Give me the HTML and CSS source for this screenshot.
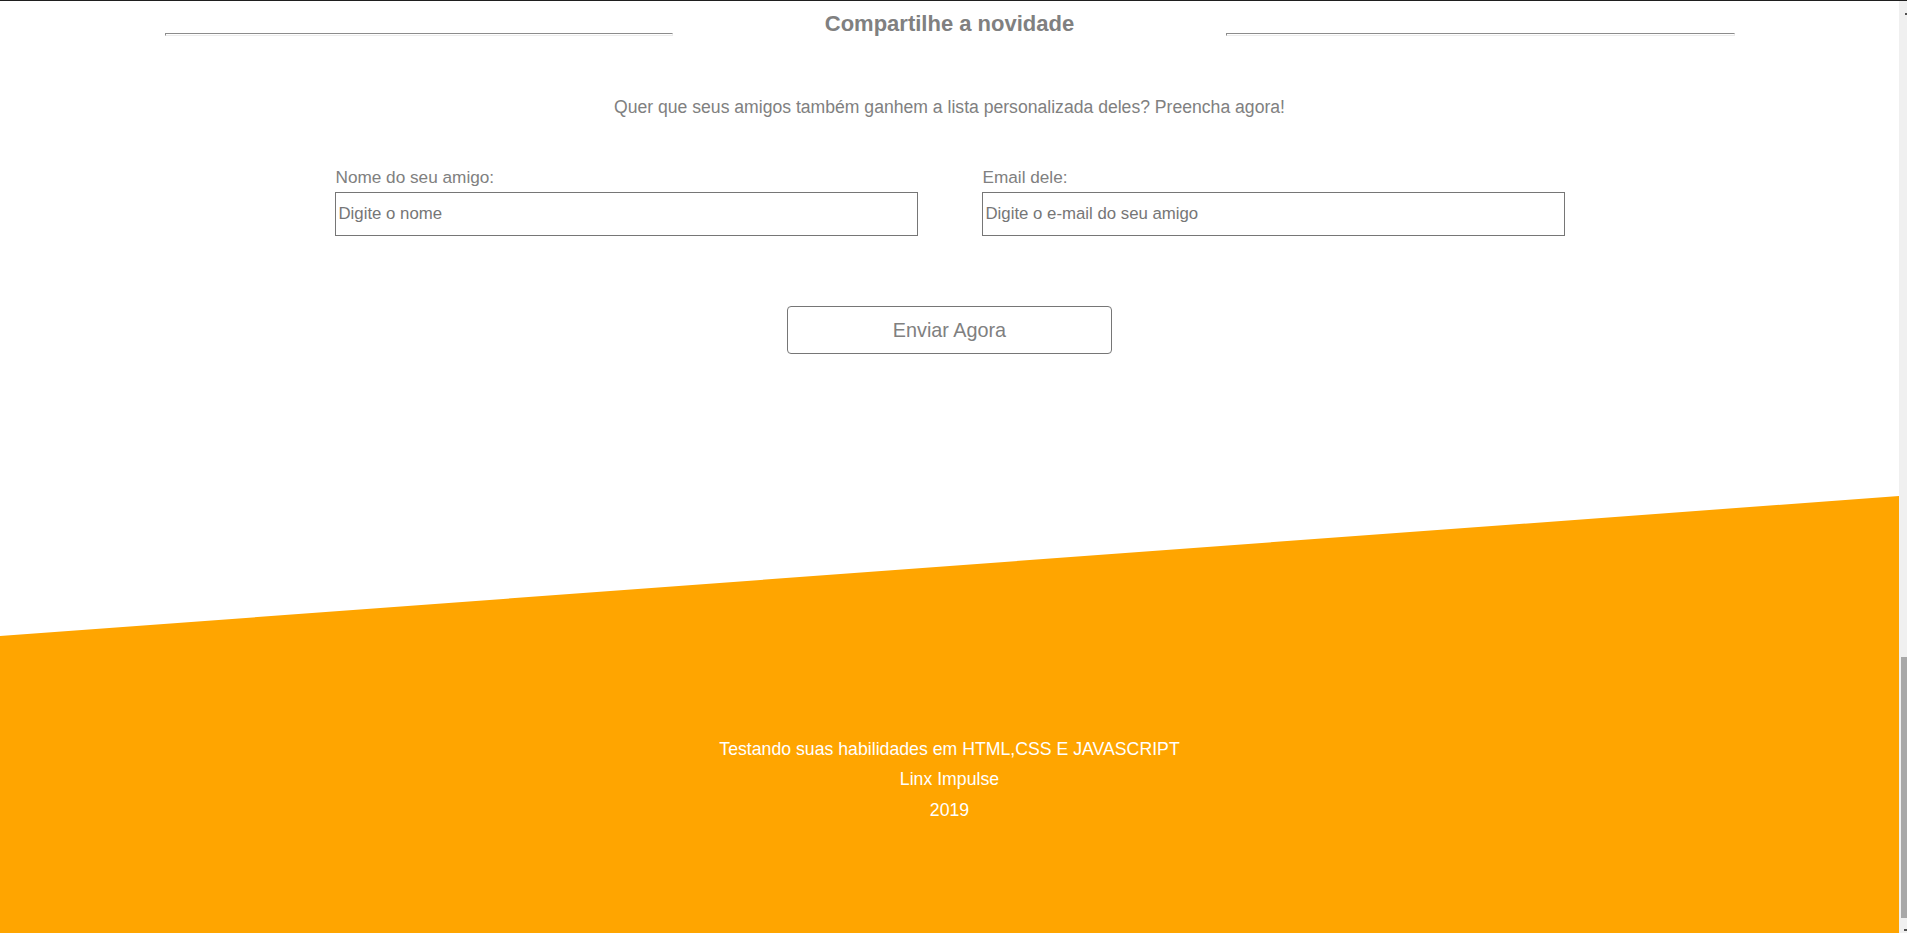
FILE: index.html
```html
<!DOCTYPE html>
<html lang="pt-BR">
<head>
<meta charset="utf-8">
<title>Compartilhe a novidade</title>
<link rel="stylesheet" href="styles.css">
</head>
<body>
<div class="window">
  <div class="page">
    <section class="share">
      <div class="share-head">
        <span class="rule"></span>
        <h2 class="share-title">Compartilhe a novidade</h2>
        <span class="rule"></span>
      </div>
      <p class="share-text">Quer que seus amigos também ganhem a lista personalizada deles? Preencha agora!</p>
      <form class="share-form">
        <div class="fields">
          <label class="field">
            <span class="field-label">Nome do seu amigo:</span>
            <input class="field-input" type="text" placeholder="Digite o nome">
          </label>
          <label class="field">
            <span class="field-label">Email dele:</span>
            <input class="field-input" type="email" placeholder="Digite o e-mail do seu amigo">
          </label>
        </div>
        <button class="send" type="button">Enviar Agora</button>
      </form>
    </section>
    <footer class="footer">
      <p class="footer-line">Testando suas habilidades em HTML,CSS E JAVASCRIPT</p>
      <p class="footer-line">Linx Impulse</p>
      <p class="footer-line">2019</p>
    </footer>
  </div>
  <div class="scrollbar">
    <span class="arrow arrow-up"></span>
    <span class="thumb"></span>
    <span class="arrow arrow-down"></span>
  </div>
</div>
</body>
</html>
```
FILE: styles.css
```css
* { box-sizing: border-box; }

html, body {
  margin: 0;
  padding: 0;
  background: #ffffff;
}

body {
  font-family: "Liberation Sans", Arial, sans-serif;
  color: #808080;
  overflow: hidden;
}

.window {
  display: flex;
  height: 933px;
  border-top: 1px solid #1f1f1f;
}

.page {
  flex: 1;
  display: flex;
  flex-direction: column;
  min-width: 0;
}

.share {
  display: flex;
  flex-direction: column;
}

.share-head {
  width: 1570px;
  margin: 0 auto;
  padding-top: 10px;
  display: grid;
  grid-template-columns: 1fr 553px 1fr;
  align-items: start;
}

.rule {
  display: block;
  height: 3px;
  margin-top: 22px;
  border-top: 1px solid #8c8c8c;
  border-left: 1px solid #8c8c8c;
  border-bottom: 1px solid #ececec;
  border-right: 1px solid #ececec;
}

.share-title {
  margin: 0;
  text-align: center;
  font-size: 22px;
  line-height: 25px;
  font-weight: bold;
  color: #808080;
}

.share-text {
  margin: 61px 0 0;
  text-align: center;
  font-size: 17.6px;
  line-height: 20px;
}

.share-form {
  display: flex;
  flex-direction: column;
  align-items: center;
  margin-top: 50px;
}

.fields {
  display: grid;
  grid-template-columns: 583px 583px;
  column-gap: 64px;
}

.field {
  display: flex;
  flex-direction: column;
  gap: 5px;
}

.field-label {
  font-size: 17.2px;
  line-height: 20px;
  padding-left: 1px;
}

.field-input {
  width: 583px;
  height: 44px;
  margin: 0;
  padding: 0 3px;
  border: 1px solid #767676;
  border-radius: 0;
  background: #fff;
  font-family: "Liberation Sans", Arial, sans-serif;
  font-size: 16.8px;
  color: #555;
  outline: none;
}

.field-input::placeholder {
  color: #767676;
  opacity: 1;
}

.send {
  margin-top: 70px;
  width: 325px;
  height: 48px;
  border: 1px solid #767676;
  border-radius: 4px;
  background: #fff;
  font-family: "Liberation Sans", Arial, sans-serif;
  font-size: 19.8px;
  color: #808080;
  cursor: pointer;
}

.footer {
  margin-top: 142px;
  flex: 1;
  background: #ffa500;
  clip-path: polygon(0 140px, 100% 0, 100% 100%, 0 100%);
  padding-top: 238px;
  text-align: center;
  color: #ffffff;
}

.footer-line {
  margin: 0;
  font-size: 17.7px;
  line-height: 30.3px;
}

.scrollbar {
  width: 8px;
  flex: none;
  background: #f0f0f0;
  display: flex;
  flex-direction: column;
  align-items: flex-end;
  padding-top: 12px;
  padding-bottom: 2px;
}

.arrow {
  display: block;
  width: 2px;
  height: 2px;
  background: #505050;
}

.thumb {
  display: block;
  width: 6px;
  height: 261px;
  margin-top: auto;
  margin-bottom: 11px;
  background: #a8a8a8;
}

.arrow-down {
  width: 3px;
}
```
